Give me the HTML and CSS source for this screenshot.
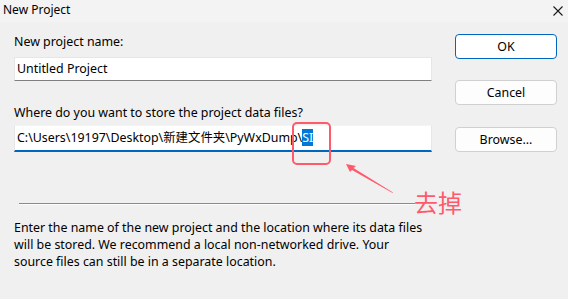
FILE: index.html
```html
<!DOCTYPE html>
<html>
<head>
<meta charset="utf-8">
<link rel="stylesheet" href="styles.css">
</head>
<body>
<div class="dialog">
  <div class="titlebar">
    <span class="title">New Project</span>
    <svg class="close" width="10" height="10" viewBox="0 0 10 10"><path d="M0.5 0.5 L9.5 9.5 M9.5 0.5 L0.5 9.5" stroke="#1a1a1a" stroke-width="1.1" fill="none"/></svg>
  </div>
  <div class="content">
    <div class="left">
      <div class="label first">New project name:</div>
      <div class="field name">Untitled Project</div>
      <div class="label second">Where do you want to store the project data files?</div>
      <div class="field path">C:\Users\19197\Desktop\新建文件夹\PyWxDump\<span class="sel">SI</span></div>
    </div>
    <div class="right">
      <div class="btn default">OK</div>
      <div class="btn cancel">Cancel</div>
      <div class="btn browse">Browse...</div>
    </div>
  </div>
  <div class="sep"></div>
  <p class="desc">Enter the name of the new project and the location where its data files will be stored. We recommend a local non-networked drive. Your source files can still be in a separate location.</p>

  <div class="mark-box"></div>
  <svg class="arrow" width="60" height="40" viewBox="0 0 60 40">
    <polygon points="0,0 10,2 7.5,4 47,28.4 46.6,29 6,6 4,8" fill="#ff5a6c"/>
  </svg>
  <div class="mark-text">去掉</div>
</div>
</body>
</html>
```
FILE: styles.css
```css
html, body {
  margin: 0;
  padding: 0;
}
body {
  background: #f0f0f0;
  font-family: "Noto Sans", "Noto Sans CJK SC", sans-serif;
  font-size: 12.4px;
  color: #000;
}
.dialog {
  position: relative;
  width: 568px;
  height: 299px;
  overflow: hidden;
}
.titlebar {
  height: 22px;
  background: #f3f3f3;
  display: flex;
  align-items: center;
  justify-content: space-between;
  padding: 0 5px 4px 3px;
  box-sizing: border-box;
}
.title {
  font-size: 12px;
  color: #000;
}
.close {
  display: block;
  margin-top: 4px;
}
.content {
  display: flex;
  padding: 12px 0 0 14px;
  gap: 23px;
}
.left {
  width: 418px;
}
.right {
  width: 102px;
}
.label {
  height: 16px;
  line-height: 16px;
  white-space: nowrap;
}
.field {
  background: #fff;
  box-sizing: border-box;
  border: 1px solid #e6e6e6;
  padding-left: 2px;
  white-space: nowrap;
}
.field.name {
  margin-top: 7px;
  height: 24px;
  line-height: 21px;
  border-bottom: 1px solid #808080;
  border-radius: 1px;
}
.label.second {
  margin-top: 24px;
}
.field.path {
  margin-top: 4px;
  height: 27px;
  line-height: 23px;
  border-bottom: 2px solid #0067c0;
  border-top-color: #f4f4f4;
}
.sel {
  background: #0078d7;
  color: #fff;
}
.btn {
  height: 25px;
  box-sizing: border-box;
  border: 1px solid #d0d0d0;
  border-radius: 4px;
  background: #fdfdfd;
  display: flex;
  align-items: center;
  justify-content: center;
}
.btn.default {
  border: 1px solid #0067c0;
  background: #fff;
}
.btn.cancel {
  margin-top: 21px;
}
.btn.browse {
  margin-top: 22px;
}
.sep {
  margin: 51px 0 0 19px;
  width: 396px;
  height: 1px;
  background: #8a8a8a;
  border-bottom: 1px solid #fcfcfc;
}
.desc {
  margin: 14px 0 0 14px;
  width: 412px;
  line-height: 17px;
}
.mark-box {
  position: absolute;
  left: 292px;
  top: 122px;
  width: 39px;
  height: 43px;
  box-sizing: border-box;
  border: 2px solid #ff5a6c;
  border-radius: 5px;
}
.arrow {
  position: absolute;
  left: 346px;
  top: 164px;
}
.mark-text {
  position: absolute;
  left: 414px;
  top: 186px;
  font-family: "Noto Sans CJK SC", sans-serif;
  font-size: 24px;
  line-height: 32px;
  color: #ff5a6c;
}
```
